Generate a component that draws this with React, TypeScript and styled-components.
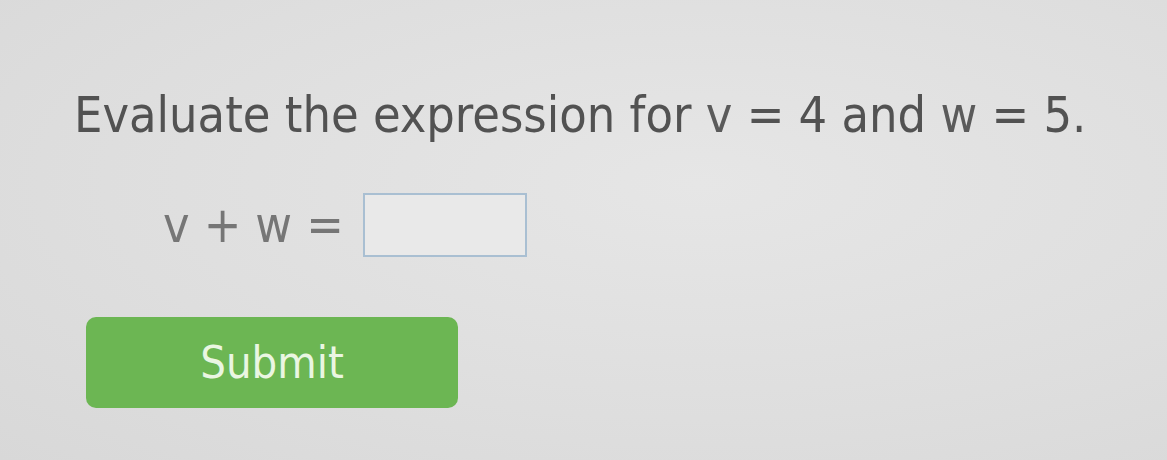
import React from "react";
import styled, { createGlobalStyle } from "styled-components";

const GlobalStyle = createGlobalStyle`
  html, body {
    margin: 0;
    padding: 0;
    background: #e0e0e0;
  }
  body {
    font-family: "DejaVu Sans Condensed", "DejaVu Sans", Verdana, sans-serif;
  }
`;

const Page = styled.div`
  width: 1167px;
  height: 460px;
  box-sizing: border-box;
  padding: 86px 0 0 74px;
  background: radial-gradient(ellipse at 60% 40%, #e6e6e6 0%, #dedede 60%, #d8d8d8 100%);
  overflow: hidden;
`;

const Prompt = styled.div`
  font-size: 50px;
  line-height: 58px;
  color: #525252;
  white-space: nowrap;
`;

const Var = styled.span`
  color: #5a5a5a;
`;

const Equation = styled.div`
  display: flex;
  align-items: center;
  gap: 14px;
  margin: 49px 0 0 89px;
  font-size: 50px;
  color: #767676;
`;

const Token = styled.span`
  line-height: 1;
`;

const AnswerBox = styled.input`
  width: 164px;
  height: 64px;
  box-sizing: border-box;
  margin-left: 5px;
  border: 2px solid #a9bfd2;
  background: #e9e9e9;
  outline: none;
`;

const SubmitButton = styled.button`
  display: flex;
  align-items: center;
  justify-content: center;
  width: 372px;
  height: 91px;
  margin: 60px 0 0 12px;
  border: none;
  border-radius: 10px;
  background: #6cb653;
  color: #eaf6e2;
  font-family: "DejaVu Sans Condensed", "DejaVu Sans", Verdana, sans-serif;
  font-size: 45px;
  cursor: pointer;
`;

export default function App() {
  return (
    <>
      <GlobalStyle />
      <Page>
        <Prompt>
          Evaluate the expression for <Var>v</Var> = 4 and <Var>w</Var> = 5.
        </Prompt>
        <Equation>
          <Token>v</Token>
          <Token>+</Token>
          <Token>w</Token>
          <Token>=</Token>
          <AnswerBox aria-label="answer" />
        </Equation>
        <SubmitButton>Submit</SubmitButton>
      </Page>
    </>
  );
}
